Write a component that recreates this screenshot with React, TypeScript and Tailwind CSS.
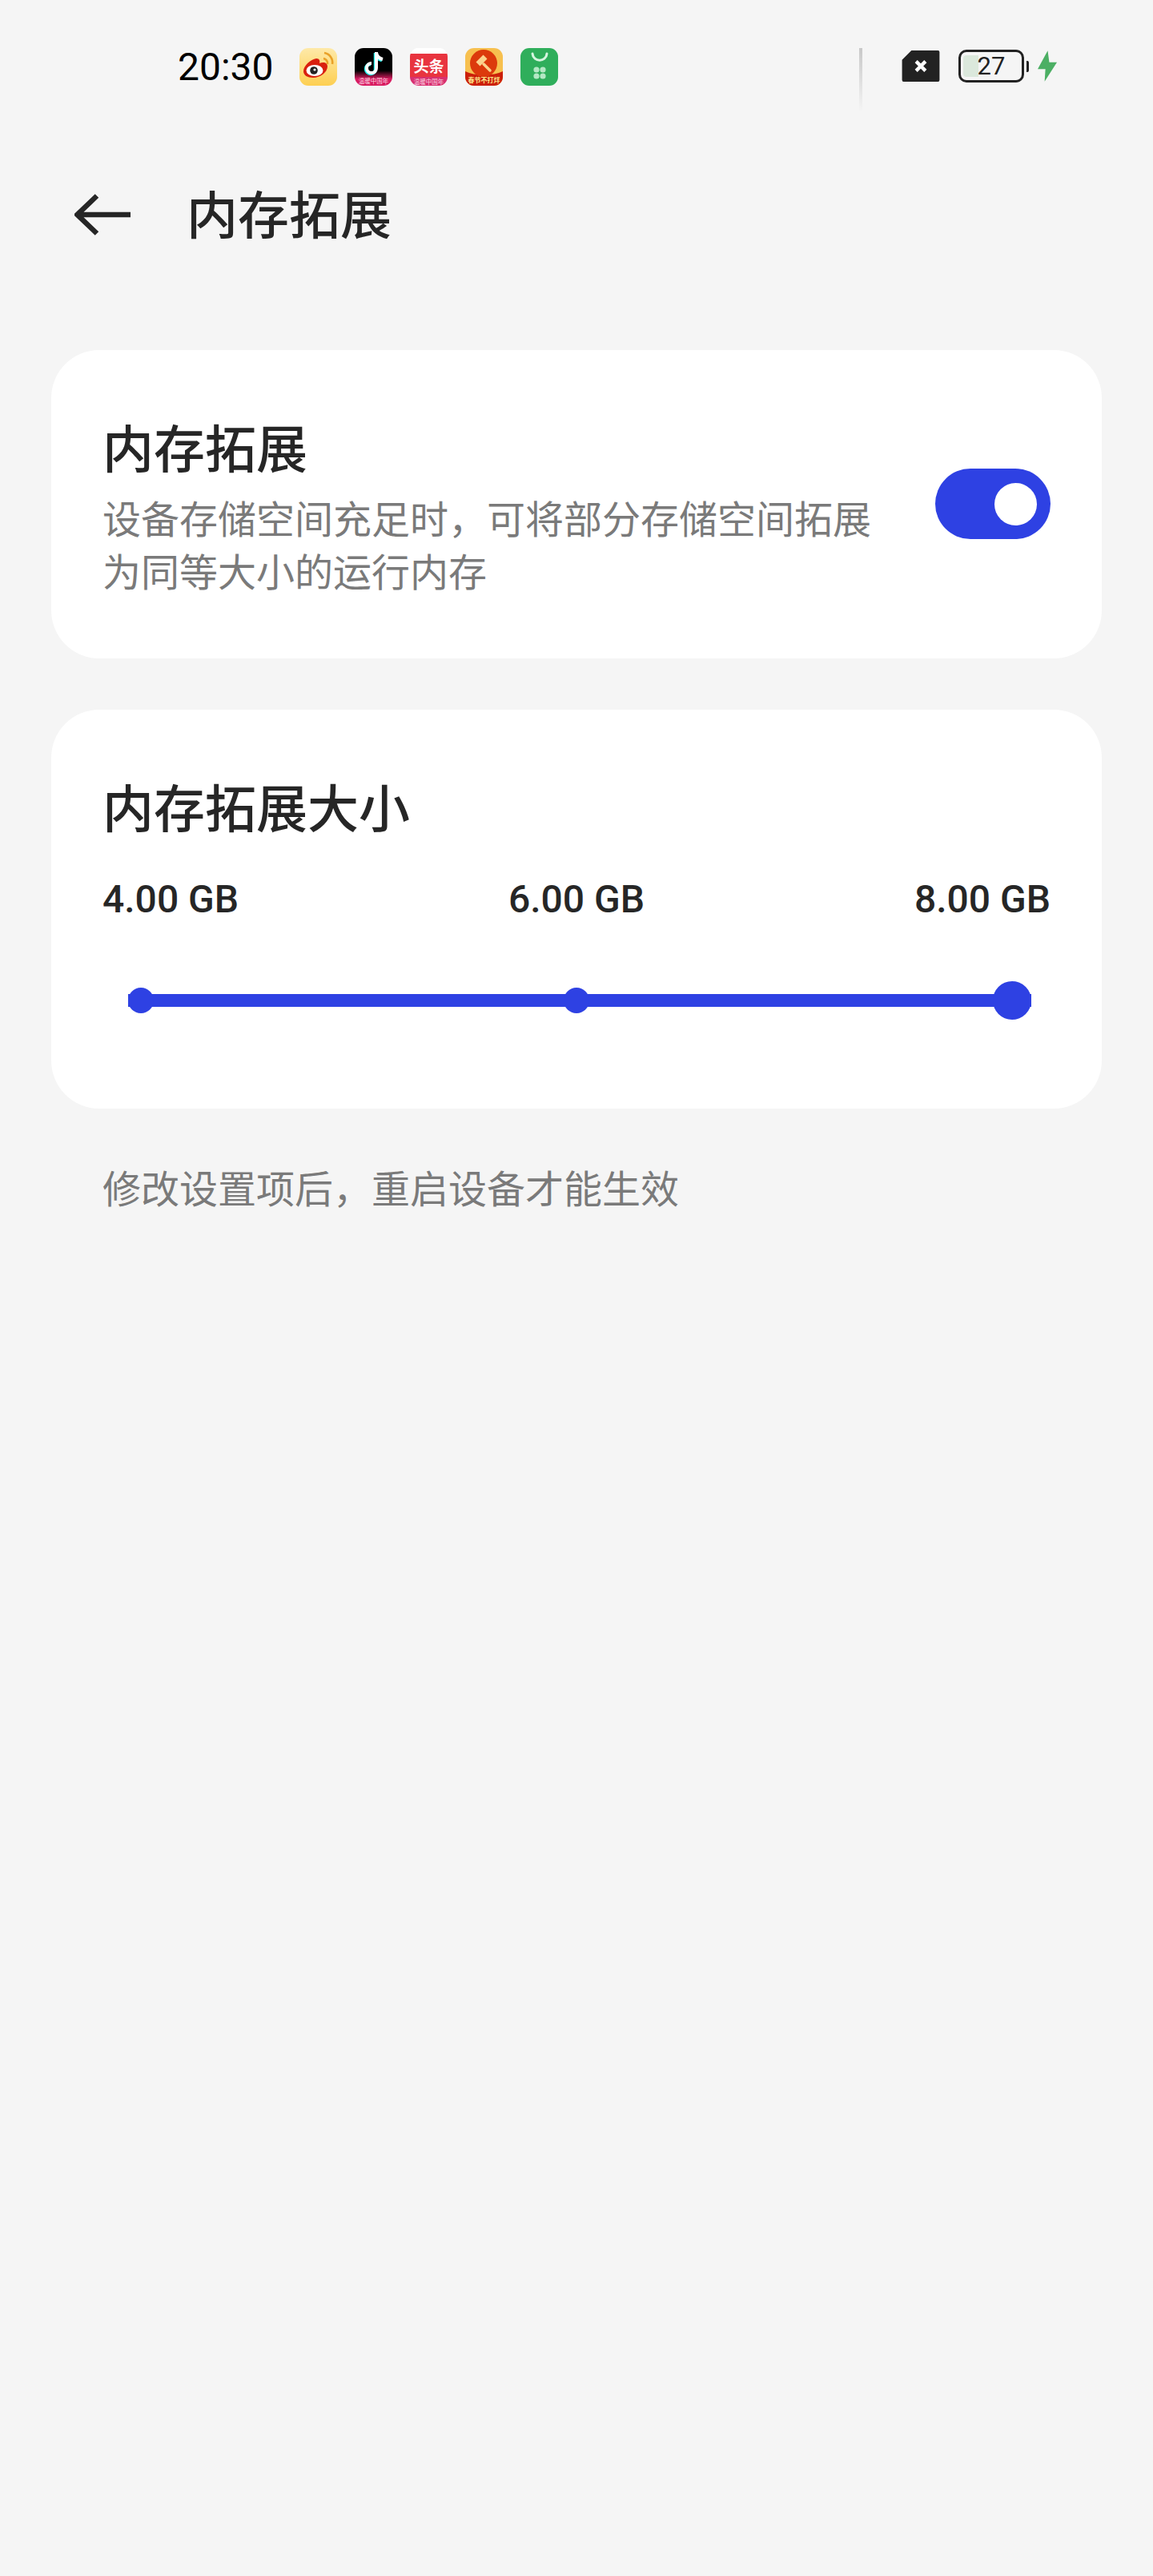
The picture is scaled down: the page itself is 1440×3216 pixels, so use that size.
const cjk = { fontFamily: '"Noto Sans CJK SC", "Roboto", sans-serif' }

function WeiboIcon() {
  return (
    <svg viewBox="0 0 47 47" className="w-[47px] h-[47px]">
      <defs>
        <linearGradient id="wb" x1="0" y1="0" x2="0" y2="1">
          <stop offset="0" stopColor="#fee9a8" />
          <stop offset="1" stopColor="#fdcf52" />
        </linearGradient>
      </defs>
      <rect width="47" height="47" rx="11" fill="url(#wb)" />
      <path d="M31 6a12 12 0 0 1 10 14" fill="none" stroke="#e9a128" strokeWidth="2.6" />
      <path d="M30 13a6 6 0 0 1 5 7" fill="none" stroke="#e9a128" strokeWidth="2.6" />
      <path d="M5 29c0-7 9-15 16-16 4 0 5 3 4 6 5-2 10-1 10 4 0 7-9 14-18 14C10 37 5 34 5 29z" fill="#d9200f" />
      <ellipse cx="19" cy="28" rx="10.5" ry="7" fill="#fff" />
      <circle cx="18" cy="28" r="4.8" fill="#222" />
      <circle cx="19" cy="27" r="1.6" fill="#fff" />
    </svg>
  )
}

function DouyinIcon() {
  return (
    <svg viewBox="0 0 47 47" className="w-[47px] h-[47px]">
      <defs>
        <linearGradient id="dy" x1="0" y1="0" x2="0" y2="1">
          <stop offset="0.6" stopColor="#000" />
          <stop offset="0.82" stopColor="#d81b60" />
        </linearGradient>
      </defs>
      <rect width="47" height="47" rx="11" fill="url(#dy)" />
      <path d="M27 5v20a6 6 0 1 1-6-6M27 6c1 5 4 7 8 8" fill="none" stroke="#25f4ee" strokeWidth="4.5" transform="translate(-1 1)" />
      <path d="M27 5v20a6 6 0 1 1-6-6M27 6c1 5 4 7 8 8" fill="none" stroke="#fff" strokeWidth="4" />
      <text x="23.5" y="44" textAnchor="middle" fontSize="7.5" fill="#fbd5e3" style={cjk}>温暖中国年</text>
    </svg>
  )
}

function ToutiaoIcon() {
  return (
    <div className="w-[47px] h-[47px] rounded-[11px] overflow-hidden flex flex-col bg-white">
      <div className="h-[7px] bg-white" />
      <div className="flex-1 bg-[#e8343f] flex items-center justify-center text-white text-[19px] font-bold leading-none" style={cjk}>
        头条
      </div>
      <div className="h-[11px] bg-[#d8306f] flex items-center justify-center text-[7.5px] leading-none text-[#fbd5e3]" style={cjk}>
        温暖中国年
      </div>
    </div>
  )
}

function AuctionIcon() {
  return (
    <svg viewBox="0 0 47 47" className="w-[47px] h-[47px]">
      <rect width="47" height="47" rx="11" fill="#f7c04f" />
      <path d="M0 29c12 6 35 6 47 0v7a11 11 0 0 1-11 11H11A11 11 0 0 1 0 36z" fill="#cc1f0a" />
      <circle cx="23" cy="19" r="17" fill="#dc3a0c" />
      <path d="M16 20l9-9" stroke="#fbd38d" strokeWidth="7" />
      <path d="M23 20l8 8" stroke="#fbd38d" strokeWidth="3.5" strokeLinecap="round" />
      <text x="23.5" y="43" textAnchor="middle" fontSize="8" fontWeight="700" fill="#fde68a" style={cjk}>春节不打烊</text>
    </svg>
  )
}

function StoreIcon() {
  return (
    <svg viewBox="0 0 47 47" className="w-[47px] h-[47px]">
      <rect width="47" height="47" rx="11" fill="#2fae5b" />
      <path d="M15 7c1 11 17 11 18 0" fill="none" stroke="#d6f5df" strokeWidth="3" strokeLinecap="round" />
      <circle cx="20" cy="27" r="3.6" fill="#b4e8c4" />
      <circle cx="28" cy="27" r="3.6" fill="#b4e8c4" />
      <circle cx="20" cy="35" r="3.6" fill="#b4e8c4" />
      <circle cx="28" cy="35" r="3.6" fill="#b4e8c4" />
    </svg>
  )
}

function StatusBar() {
  return (
    <div className="h-[164px] flex items-start pt-[60px] pl-[222px] pr-[119px]">
      <span className="text-[48px] leading-[48px] text-black w-[152px]" style={{ fontFamily: 'Roboto, sans-serif' }}>20:30</span>
      <div className="flex gap-[22px]">
        <WeiboIcon />
        <DouyinIcon />
        <ToutiaoIcon />
        <AuctionIcon />
        <StoreIcon />
      </div>
      <div className="ml-auto flex items-start">
        <div className="w-[4px] h-[80px] mr-[49px] bg-gradient-to-b from-[#c8c8c8] to-transparent" />
        <svg viewBox="0 0 48 40" className="w-[48px] h-[39px] mr-[23px] mt-[3px]">
          <path d="M12 0h34a2 2 0 0 1 2 2v36a2 2 0 0 1-2 2H2a2 2 0 0 1-2-2V12z" fill="#222" />
          <path d="M18 14l12 12M30 14L18 26" stroke="#fff" strokeWidth="4.5" />
        </svg>
        <div className="relative w-[82px] h-[41px] border-[3px] border-[#222] rounded-[10px] flex items-center justify-center overflow-hidden mt-[2px]">
          <div className="absolute left-[3px] top-[4px] bottom-[4px] w-[19px] bg-[#dbe8dc] rounded-l-[4px]" />
          <span className="relative text-[31px] leading-none text-[#222]" style={{ fontFamily: 'Roboto, sans-serif' }}>27</span>
        </div>
        <div className="w-[3px] h-[14px] bg-[#222] rounded-r-[2px] ml-[3px] mt-[16px]" />
        <svg viewBox="0 0 26 40" className="w-[25px] h-[41px] ml-[11px] mt-[2px]">
          <path d="M13 0L0 24h10l-1 16L25 15H15z" fill="#4caf64" />
        </svg>
      </div>
    </div>
  )
}

export default function App() {
  return (
    <div className="w-[1440px] h-[3216px] bg-[#f5f5f5] overflow-hidden" style={cjk}>
      <StatusBar />

      {/* Title bar */}
      <div className="h-[208px] flex items-center pl-[93px]">
        <svg viewBox="0 0 70 52" className="w-[70px] h-[52px]">
          <path d="M70 26H4M28 2.5L3.5 26 28 49.5" fill="none" stroke="#262626" strokeWidth="6.5" />
        </svg>
        <span className="ml-[70px] mb-[8px] text-[64px] leading-none text-[#262626] font-medium">内存拓展</span>
      </div>

      <div className="mt-[65px] px-[64px] flex flex-col gap-[64px]">
        <div className="h-[385px] bg-white rounded-[60px] pl-[64px] pr-[64px] flex items-center justify-between">
          <div className="w-[970px] mt-[1px]">
            <div className="text-[64px] leading-[80px] text-[#262626] font-medium">内存拓展</div>
            <div className="mt-[16px] text-[48px] leading-[66px] text-[#7a7a7a]">设备存储空间充足时，可将部分存储空间拓展为同等大小的运行内存</div>
          </div>
          <div className="w-[144px] h-[88px] mb-[1px] bg-[#2e41e3] rounded-full flex items-center justify-end pr-[17px]">
            <div className="w-[53px] h-[53px] bg-white rounded-full" />
          </div>
        </div>

        <div className="h-[498px] bg-white rounded-[60px] px-[64px] pt-[79px]">
          <div className="text-[64px] leading-[80px] text-[#262626] font-medium">内存拓展大小</div>
          <div className="mt-[50px] flex justify-between text-[48px] leading-[56px] text-[#262626] font-medium" style={{ fontFamily: 'Roboto, sans-serif' }}>
            <span>4.00 GB</span>
            <span>6.00 GB</span>
            <span>8.00 GB</span>
          </div>
          {/* Slider */}
          <div className="mt-[74px] ml-[32px] mr-[24px] h-[48px] relative flex items-center">
            <div className="w-full h-[16px] bg-[#2e41e3]" />
            <div className="absolute left-0 w-[32px] h-[32px] bg-[#2e41e3] rounded-full" />
            <div className="absolute left-[544px] w-[32px] h-[32px] bg-[#2e41e3] rounded-full" />
            <div className="absolute right-0 w-[48px] h-[48px] bg-[#2e41e3] rounded-full" />
          </div>
        </div>
      </div>

      <div className="mt-[65px] pl-[128px] text-[48px] leading-[64px] text-[#7a7a7a]">修改设置项后，重启设备才能生效</div>
    </div>
  )
}
